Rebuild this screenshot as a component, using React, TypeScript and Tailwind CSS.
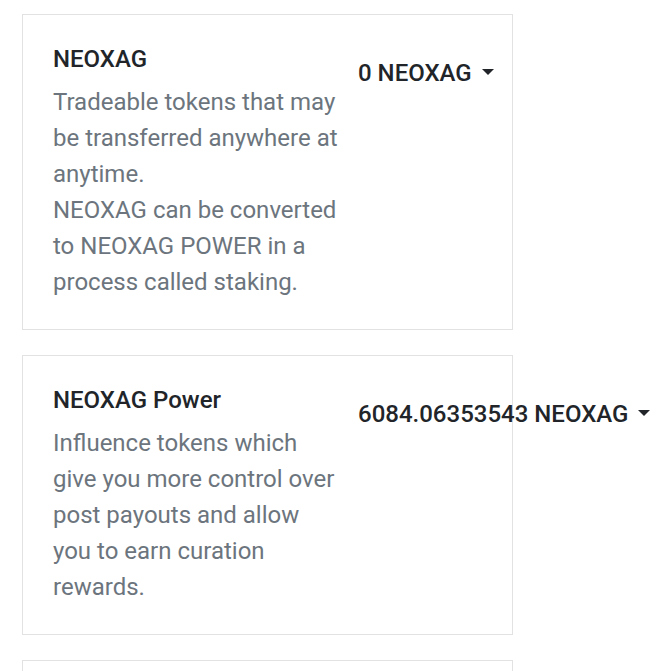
const balances = [
  {
    title: "NEOXAG",
    lines: [
      "Tradeable tokens that may be transferred anywhere at anytime.",
      "NEOXAG can be converted to NEOXAG POWER in a process called staking.",
    ],
    value: "0 NEOXAG",
  },
  {
    title: "NEOXAG Power",
    lines: [
      "Influence tokens which give you more control over post payouts and allow you to earn curation rewards.",
    ],
    value: "6084.06353543 NEOXAG",
  },
]

function BalanceCard({ title, lines, value }: { title: string; lines: string[]; value: string }) {
  return (
    <div className="w-[491px] shrink-0 border border-[#e2e2e2] bg-white pl-[30px] pr-[30px] pt-[30px] pb-[29px]">
      <div className="flex items-start">
        <div className="w-[288px] shrink-0">
          <h3 className="text-[24px] leading-[29px] font-medium text-[#212529] mb-[10px]">{title}</h3>
          {lines.map((line, i) => (
            <p key={i} className="text-[24px] leading-[36px] text-[#6c757d]">
              {line}
            </p>
          ))}
        </div>
        <button className="ml-[17px] mt-[14px] flex items-center whitespace-nowrap text-[24px] leading-[29px] font-medium text-[#212529]">
          {value}
          <span className="ml-[10px] mt-[-3px] inline-block h-0 w-0 border-x-[6px] border-t-[6px] border-x-transparent border-t-[#212529]" />
        </button>
      </div>
    </div>
  )
}

export default function App() {
  return (
    <div className="h-[671px] overflow-hidden bg-white pl-[22px] pt-[14px] font-['Roboto',sans-serif]">
      <div className="flex flex-col gap-[25px]">
        {balances.map((b) => (
          <BalanceCard key={b.title} {...b} />
        ))}
        {/* next card, only its top edge is in view */}
        <div className="h-[120px] w-[491px] shrink-0 border border-[#e2e2e2] bg-white" />
      </div>
    </div>
  )
}
